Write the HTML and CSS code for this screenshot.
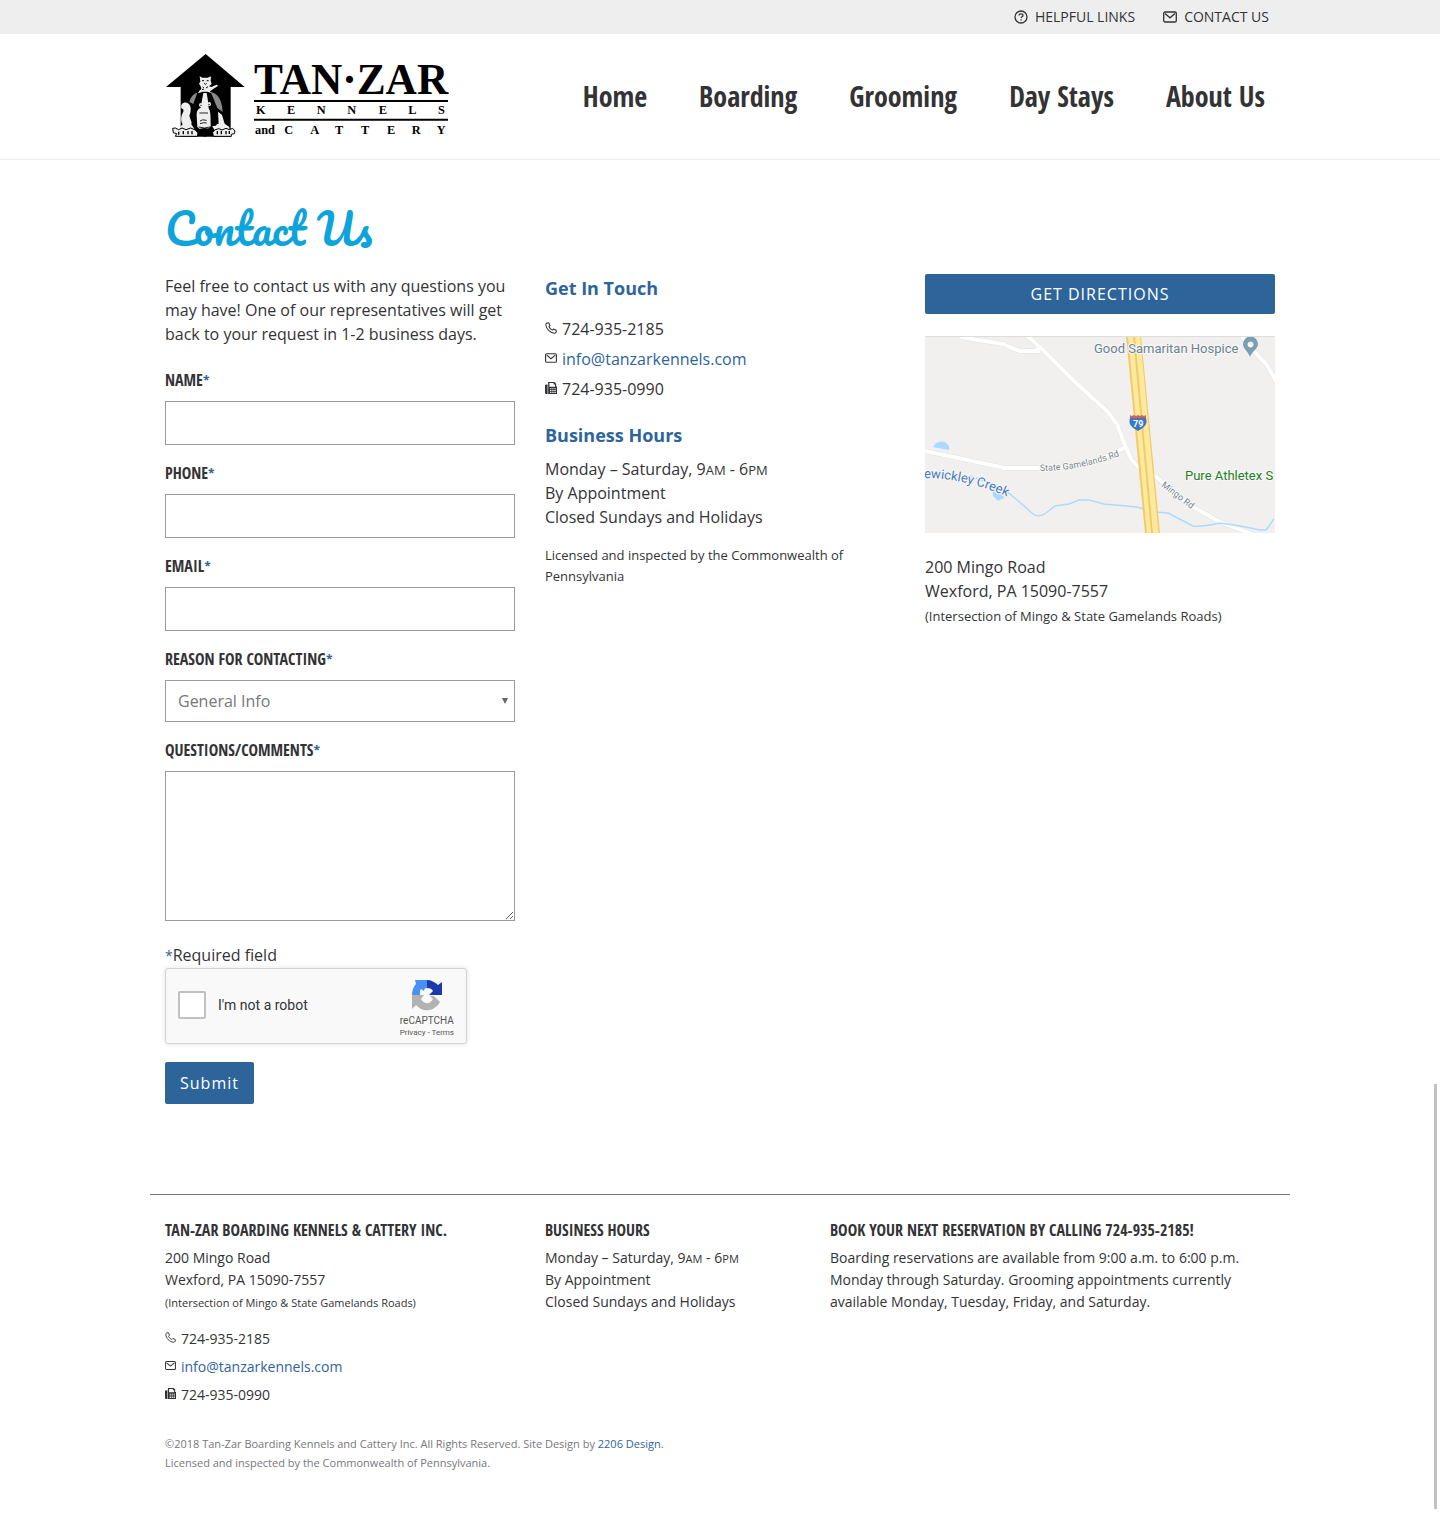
FILE: index.html
```html
<!DOCTYPE html>
<html lang="en">
<head>
<meta charset="utf-8">
<meta name="viewport" content="width=device-width, initial-scale=1">
<title>Contact Us | Tan-Zar Kennels and Cattery</title>
<link rel="stylesheet" href="styles.css">
</head>
<body>
<svg class="sprite" aria-hidden="true">
  <symbol id="icon-help" viewBox="0 0 14 14"><circle cx="7" cy="7" r="6" fill="none" stroke="currentColor" stroke-width="1.3"/><path d="M5 5.6C5 4.4 5.9 3.8 7 3.8s2 .6 2 1.7c0 1.2-1.9 1.3-1.9 2.5" fill="none" stroke="currentColor" stroke-width="1.2"/><path d="M6.4 9.2h1.3v1.3H6.4z" fill="currentColor"/></symbol>
  <symbol id="icon-mail" viewBox="0 0 14 14"><rect x=".7" y="2" width="12.6" height="10" rx="1.3" fill="none" stroke="currentColor" stroke-width="1.3"/><path d="M2 3.6l5 4.2 5-4.2" fill="none" stroke="currentColor" stroke-width="1.3"/></symbol>
  <symbol id="icon-phone" viewBox="0 0 14 14"><path d="M2.4 1.1L4.3.9 5.8 4 4.500 5.300c.7 1.900 2.300 3.400 4.200 4.200l1.300-1.300 3.100 1.500v2c-.4.900-1.300 1.400-2.300 1.300C5.800 12.500 1.500 8.300 1 3.200 1 2.300 1.500 1.400 2.400 1.100z" fill="none" stroke="currentColor" stroke-width="1.2" stroke-linejoin="round"/></symbol>
  <symbol id="icon-fax" viewBox="0 0 14 14"><path d="M0 3.700L1 3h2v11H1l-1-1z" fill="currentColor"/><path fill-rule="evenodd" d="M3.700 0h7.300l2 2v3.200h1V14H3.700zM5.200 1.300v4.200h6.500V3H10V1.300zM6 7.200v1.300h1.500V7.200zm2.500 0v1.300H10V7.200zm2.500 0v1.300h1.500V7.200zM6 9.400v1.300h1.500V9.400zm2.500 0v1.300H10V9.400zm2.500 0v1.300h1.500V9.400zM6 11.600v1.200h1.500v-1.200zm2.500 0v1.200H10v-1.200zm2.500 0v1.200h1.500v-1.200z" fill="currentColor"/></symbol>
</svg>

<div class="topbar">
  <nav class="container topbar-links" aria-label="Utility">
    <a href="#links"><svg class="icon"><use href="#icon-help"/></svg>Helpful Links</a>
    <a href="#contact"><svg class="icon"><use href="#icon-mail"/></svg>Contact Us</a>
  </nav>
</div>

<header class="header">
  <div class="container header-inner">
    <a class="logo" href="#home" aria-label="Tan-Zar Kennels and Cattery">
      <svg viewBox="15 24 852 255">
        <path d="M137 27L254 126H212V275H62V126H18z"/>
        <!-- dog's shaded back -->
        <path fill="#888" d="M112 143c-14 4-20 14-24 28l12 6zM152 141c22 4 34 24 36 60l-16-12z"/>
        <!-- tail and haunches -->
        <path fill="#eee" d="M64 190c-4-16 12-22 22-14 10 10 6 26 2 36 4 14 8 24 18 32l-8 14H58c-2-8 4-14 10-20-8-14-4-28 2-38 2-8-2-8-6-10zM174 200l12 10 8 26 14 10v10h-44l-8-14 20-6z"/>
        <!-- ears -->
        <path d="M118 148c-12 6-16 26-18 46l-6 44 8 12 12-4 4-90zM148 146c12 6 16 26 16 46l10 36-6 14-16 2-4-92z"/>
        <!-- face and muzzle -->
        <path fill="#eee" d="M130 144h10l4 24 2 22c6 8 6 24 6 54l-10 10h-20l-10-8-2-34c0-16 4-20 12-24l4-22z"/>
        <g fill="none" stroke="#222" stroke-width="3"><path d="M120 228q6-6 20-2m-20 10q12-5 20-2M118 204h26M116 246q18 6 34 0"/></g>
        <g fill="#eee"><ellipse cx="122" cy="180" rx="5" ry="6"/><ellipse cx="148" cy="177" rx="5" ry="6"/></g>
        <circle cx="123" cy="181" r="2"/><circle cx="147" cy="178" r="2"/>
        <!-- cat -->
        <path fill="#eee" d="M119 94l8 4h16l10-4-1 13 3 10-8 7 8 2 14-7 6 3-12 8-13 9 4 5-12-4h-14l-14 5 4-8 6-5-2-8-5-8 4-6z"/>
        <path fill="none" stroke="#111" stroke-width="3" d="M126 107h6m8 0h6m-14 8l4 3 4-3M128 126l4 3m6 0l6-4m-18 9l6-2"/>
        <!-- paws -->
        <g fill="#eee" stroke="#000" stroke-width="3" stroke-linejoin="round">
          <path d="M38 250l8-1 10 5 10-5 12 5 14-5 14 6 8 9-2 10H46l4-8-10-3zM158 262l6-7 12-4 10 4 12-5 10 4 10-4 7 8-2 8-9 2v6h-54z"/>
        </g>
        <path d="M56 260v9m14-11v10m14-10v10m12-10v10m76-10v10m12-10v10m14-10v10M208 258v9" fill="none" stroke="#000" stroke-width="4"/>
        <path d="M112 254q22-10 44 0l-3 12-18 10-18-10z"/>
        <path d="M282 165h582v6H282zM282 221h582v6H282z"/>
        <text class="logo-name" x="282" y="147">TAN·ZAR</text>
        <text class="logo-sub" x="288 381 470 562 656 745 834" y="208">KENNELS</text>
        <text class="logo-sub" x="285" y="267">and</text>
        <text class="logo-sub" x="373 451 525 603 681 755 830" y="267">CATTERY</text>
      </svg>
    </a>
    <nav class="main-nav" aria-label="Main">
      <a href="#home">Home</a><a href="#boarding">Boarding</a><a href="#grooming">Grooming</a><a href="#day">Day Stays</a><a href="#about">About Us</a>
    </nav>
  </div>
</header>

<main class="container">
  <h1>Contact Us</h1>
  <div class="columns">
    <form class="column">
      <p class="intro">Feel free to contact us with any questions you may have! One of our representatives will get back to your request in 1-2 business days.</p>
      <div class="field"><label for="name">Name<span>*</span></label><input id="name" type="text"></div>
      <div class="field"><label for="phone">Phone<span>*</span></label><input id="phone" type="tel"></div>
      <div class="field"><label for="email">Email<span>*</span></label><input id="email" type="email"></div>
      <div class="field"><label for="reason">Reason for contacting<span>*</span></label>
        <div class="select-wrap"><select id="reason"><option>General Info</option></select></div></div>
      <div class="field"><label for="comments">Questions/Comments<span>*</span></label><textarea id="comments"></textarea></div>
      <p class="required"><span>*</span>Required field</p>
      <div class="captcha">
        <input id="robot" type="checkbox"><label for="robot">I'm not a robot</label>
        <div class="captcha-brand">
          <svg viewBox="0 0 30 31">
            <path fill="#4a90f4" d="M15 0v8c-2 0-3 1-3 3l-3-2c-1 1-1 2-1 6H0C0 11 1 7 4 4L3 0z"/>
            <path fill="#1c3aa9" d="M15 0c4 0 8 2 11 5l4-3v13H17l4-4c-1-2-3-3-6-3z"/>
            <path fill="#b2b2b2" d="M0 15h12l-3 4c2 5 9 6 12 0l-3-3h4l6 6c-6 10-17 11-24 3l-4 4z"/>
          </svg>
          <span class="captcha-name">reCAPTCHA</span>
          <span class="captcha-legal"><a href="#privacy">Privacy</a> - <a href="#terms">Terms</a></span>
        </div>
      </div>
      <button class="button" type="submit">Submit</button>
    </form>

    <section class="column">
      <h2>Get In Touch</h2>
      <ul class="contacts">
        <li><svg class="icon"><use href="#icon-phone"/></svg>724-935-2185</li>
        <li><svg class="icon"><use href="#icon-mail"/></svg><a href="mailto:info@tanzarkennels.com">info@tanzarkennels.com</a></li>
        <li><svg class="icon"><use href="#icon-fax"/></svg>724-935-0990</li>
      </ul>
      <h2>Business Hours</h2>
      <p class="hours">Monday – Saturday, 9<span class="caps">am</span> - 6<span class="caps">pm</span><br>By Appointment<br>Closed Sundays and Holidays</p>
      <p class="note">Licensed and inspected by the Commonwealth of Pennsylvania</p>
    </section>

    <section class="column">
      <a class="button directions" href="#directions">Get Directions</a>
      <svg class="map" viewBox="0 0 350 197" role="img" aria-label="Map of Mingo Road and State Gamelands Road">
        <path fill="#f1f0ef" d="M0 0h350v197H0z"/>
        <path fill="#aadaff" d="M8 111c3-6 12-8 16-1v4zM67 151l9 2 3 9-6 3-5-5z"/>
        <path d="M35 1l43 7 16 7h21M101-1l14 12-4 4m4-4l34 34 34 31 9 12 6 16 8 19 8 9M0 115l80 17h33c40 0 65-9 88-21M229 139l34 29 32 18 32 12M315-2l12 15 15 16 10 18" fill="none" stroke="#e2e2e2" stroke-width="5"/>
        <path d="M35 1l43 7 16 7h21M101-1l14 12-4 4m4-4l34 34 34 31 9 12 6 16 8 19 8 9M0 115l80 17h33c40 0 65-9 88-21M229 139l34 29 32 18 32 12M315-2l12 15 15 16 10 18" fill="none" stroke="#fff" stroke-width="4"/>
        <path fill="none" stroke="#aadaff" stroke-width="1.500" d="M45 140l15 5 20 9 11 9 17 15q6 4 13-1l9-7 14-2 10-4h10l15 4 33 3 18 5 13 1 25 13q8 1 27-3l20 3 20 4h6l8-11"/>
        <path d="M201 0h15l19 197H220z" fill="#f2cb68"/>
        <path d="M203 0h5l18 197h-4zM210 0h5l18.500 197H228z" fill="#ffe99f"/>
        <path d="M205 82h16q3 8-8 13-11-5-8-13" fill="#3c78c8"/><path d="M205 79l2 1 2-1 2 1 2-1 2 1 2-1 2 1 2-1v3h-16z" fill="#d8605b"/>
        <text x="208" y="91" font-size="9" font-weight="700" fill="#fff">79</text>
        <g class="map-text">
          <text x="169" y="17" font-size="13" fill="#6c838e">Good Samaritan Hospice</text>
          <text x="260" y="144" font-size="13" fill="#258025">Pure Athletex S</text>
          <path id="creek" d="M-1 142q42 0 86 20" fill="none" stroke="none"/>
          <text font-size="13" fill="#4779bc"><textPath href="#creek">ewickley Creek</textPath></text>
          <path id="game" d="M115 135q45 0 92-20" fill="none" stroke="none"/>
          <text font-size="9" fill="#7b868b"><textPath href="#game">State Gamelands Rd</textPath></text>
          <path id="mingo" d="M236 150l38 29" fill="none" stroke="none"/>
          <text font-size="9" fill="#7b868b"><textPath href="#mingo">Mingo Rd</textPath></text>
        </g>
        <path fill-rule="evenodd" fill="#7b9eb0" d="M325 21c-2-6-7-8-7-13a7.500 7.500 0 0 1 15 0c0 5-6 7-8 13zM325.500 5.500a3 3 0 1 0 .1 0z"/>
        <path d="M0 .5h350" stroke="#dedede"/>
      </svg>
      <address>200 Mingo Road<br>Wexford, PA 15090-7557<br><small>(Intersection of Mingo &amp; State Gamelands Roads)</small></address>
    </section>
  </div>
</main>

<footer class="container footer">
  <div class="footer-columns">
    <section>
      <h3>Tan-Zar Boarding Kennels &amp; Cattery Inc.</h3>
      <address>200 Mingo Road<br>Wexford, PA 15090-7557<br><small>(Intersection of Mingo &amp; State Gamelands Roads)</small></address>
      <ul class="contacts">
        <li><svg class="icon"><use href="#icon-phone"/></svg>724-935-2185</li>
        <li><svg class="icon"><use href="#icon-mail"/></svg><a href="mailto:info@tanzarkennels.com">info@tanzarkennels.com</a></li>
        <li><svg class="icon"><use href="#icon-fax"/></svg>724-935-0990</li>
      </ul>
    </section>
    <section>
      <h3>Business Hours</h3>
      <p>Monday – Saturday, 9<span class="caps">am</span> - 6<span class="caps">pm</span><br>By Appointment<br>Closed Sundays and Holidays</p>
    </section>
    <section>
      <h3>Book your next reservation by calling 724-935-2185!</h3>
      <p>Boarding reservations are available from 9:00 a.m. to 6:00 p.m. Monday through Saturday. Grooming appointments currently available Monday, Tuesday, Friday, and Saturday.</p>
    </section>
  </div>
  <p class="copyright">©2018 Tan-Zar Boarding Kennels and Cattery Inc. All Rights Reserved. Site Design by <a href="#design">2206 Design.</a><br>Licensed and inspected by the Commonwealth of Pennsylvania.</p>
</footer>
<div class="scroll-thumb"></div>
</body>
</html>
```
FILE: styles.css
```css
* { box-sizing: border-box; }
body {
  margin: 0;
  background: #fff;
  color: #333336;
  font: 16px/24px "Open Sans", sans-serif;
}
p, h1, h2, h3, ul, address { margin: 0; padding: 0; font-style: normal; }
ul { list-style: none; }
a { color: #2d659b; text-decoration: none; }
.sprite { display: none; }
.icon { width: 14px; height: 14px; flex: none; }
.container { max-width: 1140px; margin: 0 auto; padding: 0 15px; }

.topbar { background: #eee; }
.topbar-links { display: flex; justify-content: flex-end; gap: 28px; padding-right: 21px; }
.topbar-links a {
  display: flex;
  align-items: center;
  gap: 7px;
  color: #333336;
  font-size: 14px;
  line-height: 34px;
  text-transform: uppercase;
}

.header { border-bottom: 1px solid #eee; }
.header-inner { display: flex; align-items: center; justify-content: space-between; min-height: 125px; padding-right: 25px; }
.logo svg { display: block; width: 284px; height: 85px; }
.logo { padding-bottom: 2px; }
.logo-name { font: 700 130px "Liberation Serif", serif; }
.logo-sub { font: 700 37px "Liberation Serif", serif; }
.main-nav { display: flex; gap: 52px; padding-bottom: 2px; }
.main-nav a { color: #333336; font: 700 28px/40px "Open Sans Condensed", "Open Sans", sans-serif; }

h1 { padding: 32px 0 10px; color: #0ca4da; font: 400 43px/72px "Pacifico", cursive; }
.columns { display: grid; grid-template-columns: repeat(3, 1fr); gap: 30px; }
h2 { color: #2d659b; font-size: 18px; line-height: 28px; }
.intro { margin-bottom: 22px; }
.field { margin-bottom: 16px; }
label { display: block; }
.field label { margin-bottom: 9px; font: 700 16px/24px "Open Sans Condensed", "Open Sans", sans-serif; text-transform: uppercase; }
.field label span, .required span { color: #2d659b; font-size: 14px; line-height: 1; }
input[type="text"], input[type="tel"], input[type="email"], select, textarea {
  display: block;
  width: 100%;
  height: 44px;
  padding: 0 12px;
  border: 1px solid #999;
  border-radius: 0;
  background: #fff;
  color: #77777c;
  font: 16px "Open Sans", sans-serif;
}
.select-wrap { position: relative; }
select { height: 42px; appearance: none; }
.select-wrap::after {
  content: "";
  position: absolute;
  top: 18px;
  right: 7px;
  border: 3px solid transparent;
  border-top: 6px solid #666;
  border-bottom: 0;
}
textarea { height: 150px; }
.required { padding-top: 6px; }

.captcha {
  display: flex;
  align-items: center;
  width: 302px;
  height: 76px;
  margin: 1px 0 18px;
  padding: 0 12px 2px;
  border: 1px solid #d3d3d3;
  border-radius: 3px;
  background: #f9f9f9;
  box-shadow: 0 0 4px 1px rgba(0, 0, 0, .08);
  font: 14px/17px Roboto, sans-serif;
}
.captcha input { appearance: none; width: 28px; height: 28px; margin: 0 12px 0 0; border: 2px solid #c1c1c1; border-radius: 2px; background: #fff; }
.captcha-brand { display: flex; flex-direction: column; align-items: center; margin-left: auto; padding-top: 8px; color: #555; }
.captcha-brand svg { width: 30px; height: 31px; }
.captcha-name { margin-top: 4px; font-size: 10px; line-height: 12px; }
.captcha-legal { font-size: 8px; line-height: 12px; }
.captcha-legal a { color: #555; }

.button {
  display: block;
  padding: 9px 15px;
  border: 0;
  border-radius: 2px;
  background: #2d659b;
  color: #fff;
  font: 16px/24px "Open Sans", sans-serif;
  letter-spacing: 1px;
}
.directions { padding: 8px; text-align: center; text-transform: uppercase; }

.contacts { padding: 12px 0 17px; line-height: 30px; }
.contacts li { display: flex; align-items: center; gap: 5px; }
.contacts .icon { width: 12px; height: 12px; margin-bottom: 3px; }
.hours { padding: 8px 0 16px; }
.caps { font-size: 13px; line-height: 1; text-transform: uppercase; }
.note { font-size: 13px; line-height: 21px; }
.map { display: block; width: 100%; height: auto; margin: 22px 0; font-family: Roboto, sans-serif; }
.map-text { paint-order: stroke; stroke: #f7f7f7; stroke-width: 2px; }
small { font-size: 13px; }

.footer { margin-top: 90px; border-top: 1px solid #77777c; padding-top: 23px; font-size: 14px; line-height: 22px; }
.footer-columns { display: grid; grid-template-columns: 350fr 255fr 445fr; gap: 30px; }
h3 { margin-bottom: 5px; font: 700 16px/24px "Open Sans Condensed", "Open Sans", sans-serif; text-transform: uppercase; }
.footer small, .footer .caps { font-size: 11px; }
.footer .contacts { line-height: 28px; padding: 11px 0 0; }
.footer .contacts .icon { width: 11px; height: 11px; }
.copyright { padding: 25px 0 46px; color: #77777c; font-size: 11px; line-height: 19px; }
.scroll-thumb { position: fixed; right: 3px; bottom: 9px; width: 3px; height: 28%; background: #c1c1c1; }
```
